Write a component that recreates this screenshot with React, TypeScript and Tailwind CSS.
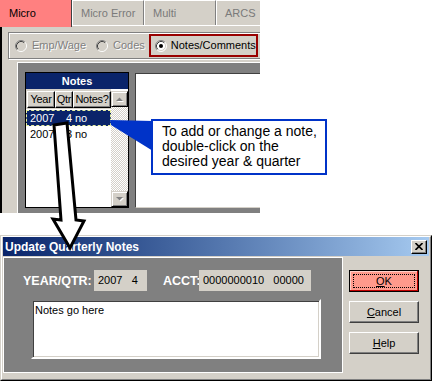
import React from "react";

const Radio = ({ checked, disabled }: { checked?: boolean; disabled?: boolean }) => (
  <svg width="12" height="12" viewBox="0 0 12 12" className="shrink-0">
    <circle cx="6" cy="6" r="5" fill={disabled ? "#d4d0c8" : "#ffffff"} />
    <path d="M2.11 9.89 A5.5 5.5 0 0 1 9.89 2.11" stroke="#808080" fill="none" />
    <path d="M9.89 2.11 A5.5 5.5 0 0 1 2.11 9.89" stroke="#ffffff" fill="none" />
    <path d="M2.82 9.18 A4.5 4.5 0 0 1 9.18 2.82" stroke="#404040" fill="none" />
    <path d="M9.18 2.82 A4.5 4.5 0 0 1 2.82 9.18" stroke="#d4d0c8" fill="none" />
    {checked && <circle cx="6" cy="6" r="2" fill="#000" />}
  </svg>
);

const Tab = ({ label, w }: { label: string; w: string }) => (
  <div className={`${w} h-[27px] flex flex-col`}>
    <div className="flex-1 bg-[#d4d0c8] border-t border-l border-white border-r border-r-[#808080] pl-[8px] pt-[6px] text-[#7a7a7a] leading-[13px] whitespace-nowrap">
      {label}
    </div>
    <div className="h-[1px] bg-white" />
    <div className="h-[1px] bg-[#d4d0c8]" />
  </div>
);

const Arrow = ({ up }: { up?: boolean }) => (
  <svg width="8" height="5" viewBox="0 0 8 5">
    {up ? (
      <>
        <path d="M1 5 L4.5 1.5 L8 5Z" fill="#ffffff" />
        <path d="M0 4 L3.5 0.5 L7 4Z" fill="#808080" />
      </>
    ) : (
      <>
        <path d="M1 1 L4.5 4.5 L8 1Z" fill="#ffffff" />
        <path d="M0 0 L3.5 3.5 L7 0Z" fill="#808080" />
      </>
    )}
  </svg>
);

const HeadCell = ({ w, children }: { w: string; children: React.ReactNode }) => (
  <div
    className={`${w} h-[17px] bg-[#d4d0c8] border-t border-l border-white border-r border-b border-r-black border-b-black shadow-[inset_-1px_-1px_0_#808080] flex items-center justify-center leading-[13px] overflow-hidden whitespace-nowrap tracking-[-0.3px]`}
  >
    {children}
  </div>
);

const ScrollBtn = ({ up }: { up?: boolean }) => (
  <div className="w-[17px] h-[16px] bg-[#d4d0c8] border-t border-l border-[#d4d0c8] border-r border-b border-r-black border-b-black shadow-[inset_1px_1px_0_#fff,inset_-1px_-1px_0_#808080] flex items-center justify-center">
    <Arrow up={up} />
  </div>
);

export default function App() {
  return (
    <div className="relative w-[432px] h-[381px] bg-white overflow-hidden font-['Liberation_Sans',Arial,sans-serif] text-black">
      {/* Top window part */}
      <div className="w-[260px] h-[213px] flex flex-col overflow-hidden text-[11px]">
        <div className="flex h-[27px] shrink-0">
          <div className="w-[72px] shrink-0 h-[27px] bg-[#ff8080] border-r border-[#404040] pl-[9px] pt-[7px] leading-[13px]">
            Micro
          </div>
          <Tab label="Micro Error" w="w-[72px] shrink-0" />
          <Tab label="Multi" w="w-[72px] shrink-0" />
          <Tab label="ARCS" w="w-[60px] shrink-0" />
        </div>
        <div className="flex-1 bg-[#d4d0c8] border-l-2 border-black flex flex-col">
          {/* radio group */}
          <div className="mt-[5px] ml-[6px] w-[270px] h-[27px] border border-[#808080] shadow-[1px_1px_0_#fff,inset_1px_1px_0_#fff] flex items-center shrink-0">
            <div className="ml-[6px]">
              <Radio disabled />
            </div>
            <span className="ml-[5px] text-[#808080] [text-shadow:1px_1px_0_#fff] leading-[13px]">Emp/Wage</span>
            <div className="ml-[10px]">
              <Radio disabled />
            </div>
            <span className="ml-[5px] text-[#808080] [text-shadow:1px_1px_0_#fff] leading-[13px]">Codes</span>
            <div className="ml-[4px] h-[23px] w-[109px] border-2 border-[#990000] flex items-center pl-[4px]">
              <Radio checked />
              <span className="ml-[4px] leading-[13px] whitespace-nowrap">Notes/Comments</span>
            </div>
          </div>
          {/* gray frame */}
          <div className="ml-[15px] mt-[3px] flex-1 border-t border-l border-white bg-[#808080] flex pl-[7px] pt-[9px] pb-[5px]">
            {/* Notes grid */}
            <div className="w-[104px] h-[136px] shrink-0 border border-black bg-white flex flex-col">
              <div className="h-[16px] bg-[#0a246a] text-white font-bold text-center leading-[16px]">Notes</div>
              <div className="flex flex-1">
                <div className="w-[85px] flex flex-col">
                  <div className="h-[20px] bg-[#d4d0c8] flex pt-[2px] pl-[1px]">
                    <HeadCell w="w-[28px]">Year</HeadCell>
                    <HeadCell w="w-[18px]">Qtr</HeadCell>
                    <HeadCell w="w-[38px]">Notes?</HeadCell>
                  </div>
                  <div className="mt-[1px] h-[16px] bg-[#0a246a] border border-dashed border-[#e8f0a0] text-white flex items-center leading-[13px]">
                    <span className="w-[27px] pl-[3px]">2007</span>
                    <span className="w-[18px] text-right">4</span>
                    <span className="pl-[3px]">no</span>
                  </div>
                  <div className="h-[16px] flex items-center leading-[13px] border border-transparent">
                    <span className="w-[27px] pl-[3px]">2007</span>
                    <span className="w-[18px] text-right">3</span>
                    <span className="pl-[3px]">no</span>
                  </div>
                </div>
                <div className="w-[17px] flex flex-col pt-[2px]">
                  <ScrollBtn up />
                  <div className="flex-1 bg-[repeating-conic-gradient(#d4d0c8_0%_25%,#ffffff_0%_50%)] [background-size:2px_2px]" />
                  <ScrollBtn />
                </div>
              </div>
            </div>
            {/* white panel */}
            <div className="ml-[6px] mt-[1px] w-[140px] h-[135px] shrink-0 bg-white border-t border-l border-[#404040] border-b border-b-[#d4d0c8]" />
          </div>
        </div>
      </div>

      {/* Dialog */}
      <div className="mt-[22px] w-[432px] h-[146px] border-t border-l border-[#d4d0c8] border-r border-b border-r-black border-b-black">
        <div className="h-full border-t border-l border-white border-r border-b border-r-[#808080] border-b-[#808080] bg-[#d4d0c8] px-[1px] flex flex-col">
          <div className="h-[19px] shrink-0 bg-linear-to-r from-[#0a246a] to-[#a6caf0] flex items-center justify-between pl-[2px] pr-[2px]">
            <span className="text-white font-bold text-[12px] leading-[14px]">Update Quarterly Notes</span>
            <div className="w-[16px] h-[14px] bg-[#d4d0c8] border-t border-l border-white border-r border-b border-r-black border-b-black shadow-[inset_-1px_-1px_0_#808080] flex items-center justify-center">
              <svg width="8" height="7" viewBox="0 0 8 7">
                <path d="M0.5 0 L7.5 7 M7.5 0 L0.5 7" stroke="#000" strokeWidth="1.6" />
              </svg>
            </div>
          </div>
          <div className="flex mt-[1px]">
            <div className="w-[340px] h-[116px] border border-white bg-[#808080] flex flex-col pt-[12px] pl-[19px]">
              <div className="flex items-center h-[21px]">
                <span className="w-[71px] text-white font-bold text-[12.5px] leading-[14px]">YEAR/QTR:</span>
                <div className="w-[53px] h-[21px] bg-[#d4d0c8] text-[11px] flex items-center pl-[4px] whitespace-pre">2007   4</div>
                <span className="ml-[16px] w-[36px] text-white font-bold text-[12.5px] leading-[14px]">ACCT:</span>
                <div className="w-[112px] h-[21px] bg-[#d4d0c8] text-[11px] flex items-center pl-[4px] whitespace-pre">0000000010   00000</div>
              </div>
              <div className="mt-[8px] ml-[8px] w-[290px] h-[60px] bg-white border-2 border-t-[#808080] border-l-[#808080] border-b-white border-r-white shadow-[inset_1px_1px_0_#404040,inset_-1px_-1px_0_#d4d0c8] text-[11px] pl-[2px] pt-[3px] leading-[13px]">
                Notes go here
              </div>
            </div>
            <div className="ml-[6px] mt-[13px] flex flex-col gap-[9px] text-[11px]">
              <div className="relative w-[70px] h-[22px] border border-black bg-[#ff9a8c] shadow-[inset_-1px_-1px_0_#c00000,inset_1px_1px_0_#ffd0c8] flex items-center justify-center leading-[13px]">
                <div className="absolute inset-[3px] border border-dotted border-black" />
                <span>
                  <span className="underline">O</span>K
                </span>
              </div>
              <div className="w-[70px] h-[22px] bg-[#d4d0c8] border-t border-l border-white border-r border-b border-r-[#404040] border-b-[#404040] shadow-[inset_-1px_-1px_0_#808080] flex items-center justify-center leading-[13px]">
                <span>
                  <span className="underline">C</span>ancel
                </span>
              </div>
              <div className="w-[70px] h-[22px] bg-[#d4d0c8] border-t border-l border-white border-r border-b border-r-[#404040] border-b-[#404040] shadow-[inset_-1px_-1px_0_#808080] flex items-center justify-center leading-[13px]">
                <span>
                  <span className="underline">H</span>elp
                </span>
              </div>
            </div>
          </div>
        </div>
      </div>

      {/* Callout pointer */}
      <svg className="absolute left-0 top-0 pointer-events-none" width="432" height="381">
        <polygon points="110,120 153,121 153,151 111,125" fill="#0033c8" />
      </svg>
      {/* Callout box */}
      <div className="absolute left-[151px] top-[119px] w-[176px] h-[56px] bg-white border-2 border-[#0033c8] pl-[9px] pt-[3px] text-[14px] leading-[15px]">
        To add or change a note,
        <br />
        double-click on the
        <br />
        desired year &amp; quarter
      </div>
      {/* Big arrow */}
      <svg className="absolute left-0 top-0 pointer-events-none" width="432" height="381">
        <polygon
          points="54,125 67,123 76,220 84,221 70,248 53,219 61,220"
          fill="#ffffff"
          stroke="#000"
          strokeWidth="3"
          strokeLinejoin="miter"
        />
      </svg>
    </div>
  );
}
